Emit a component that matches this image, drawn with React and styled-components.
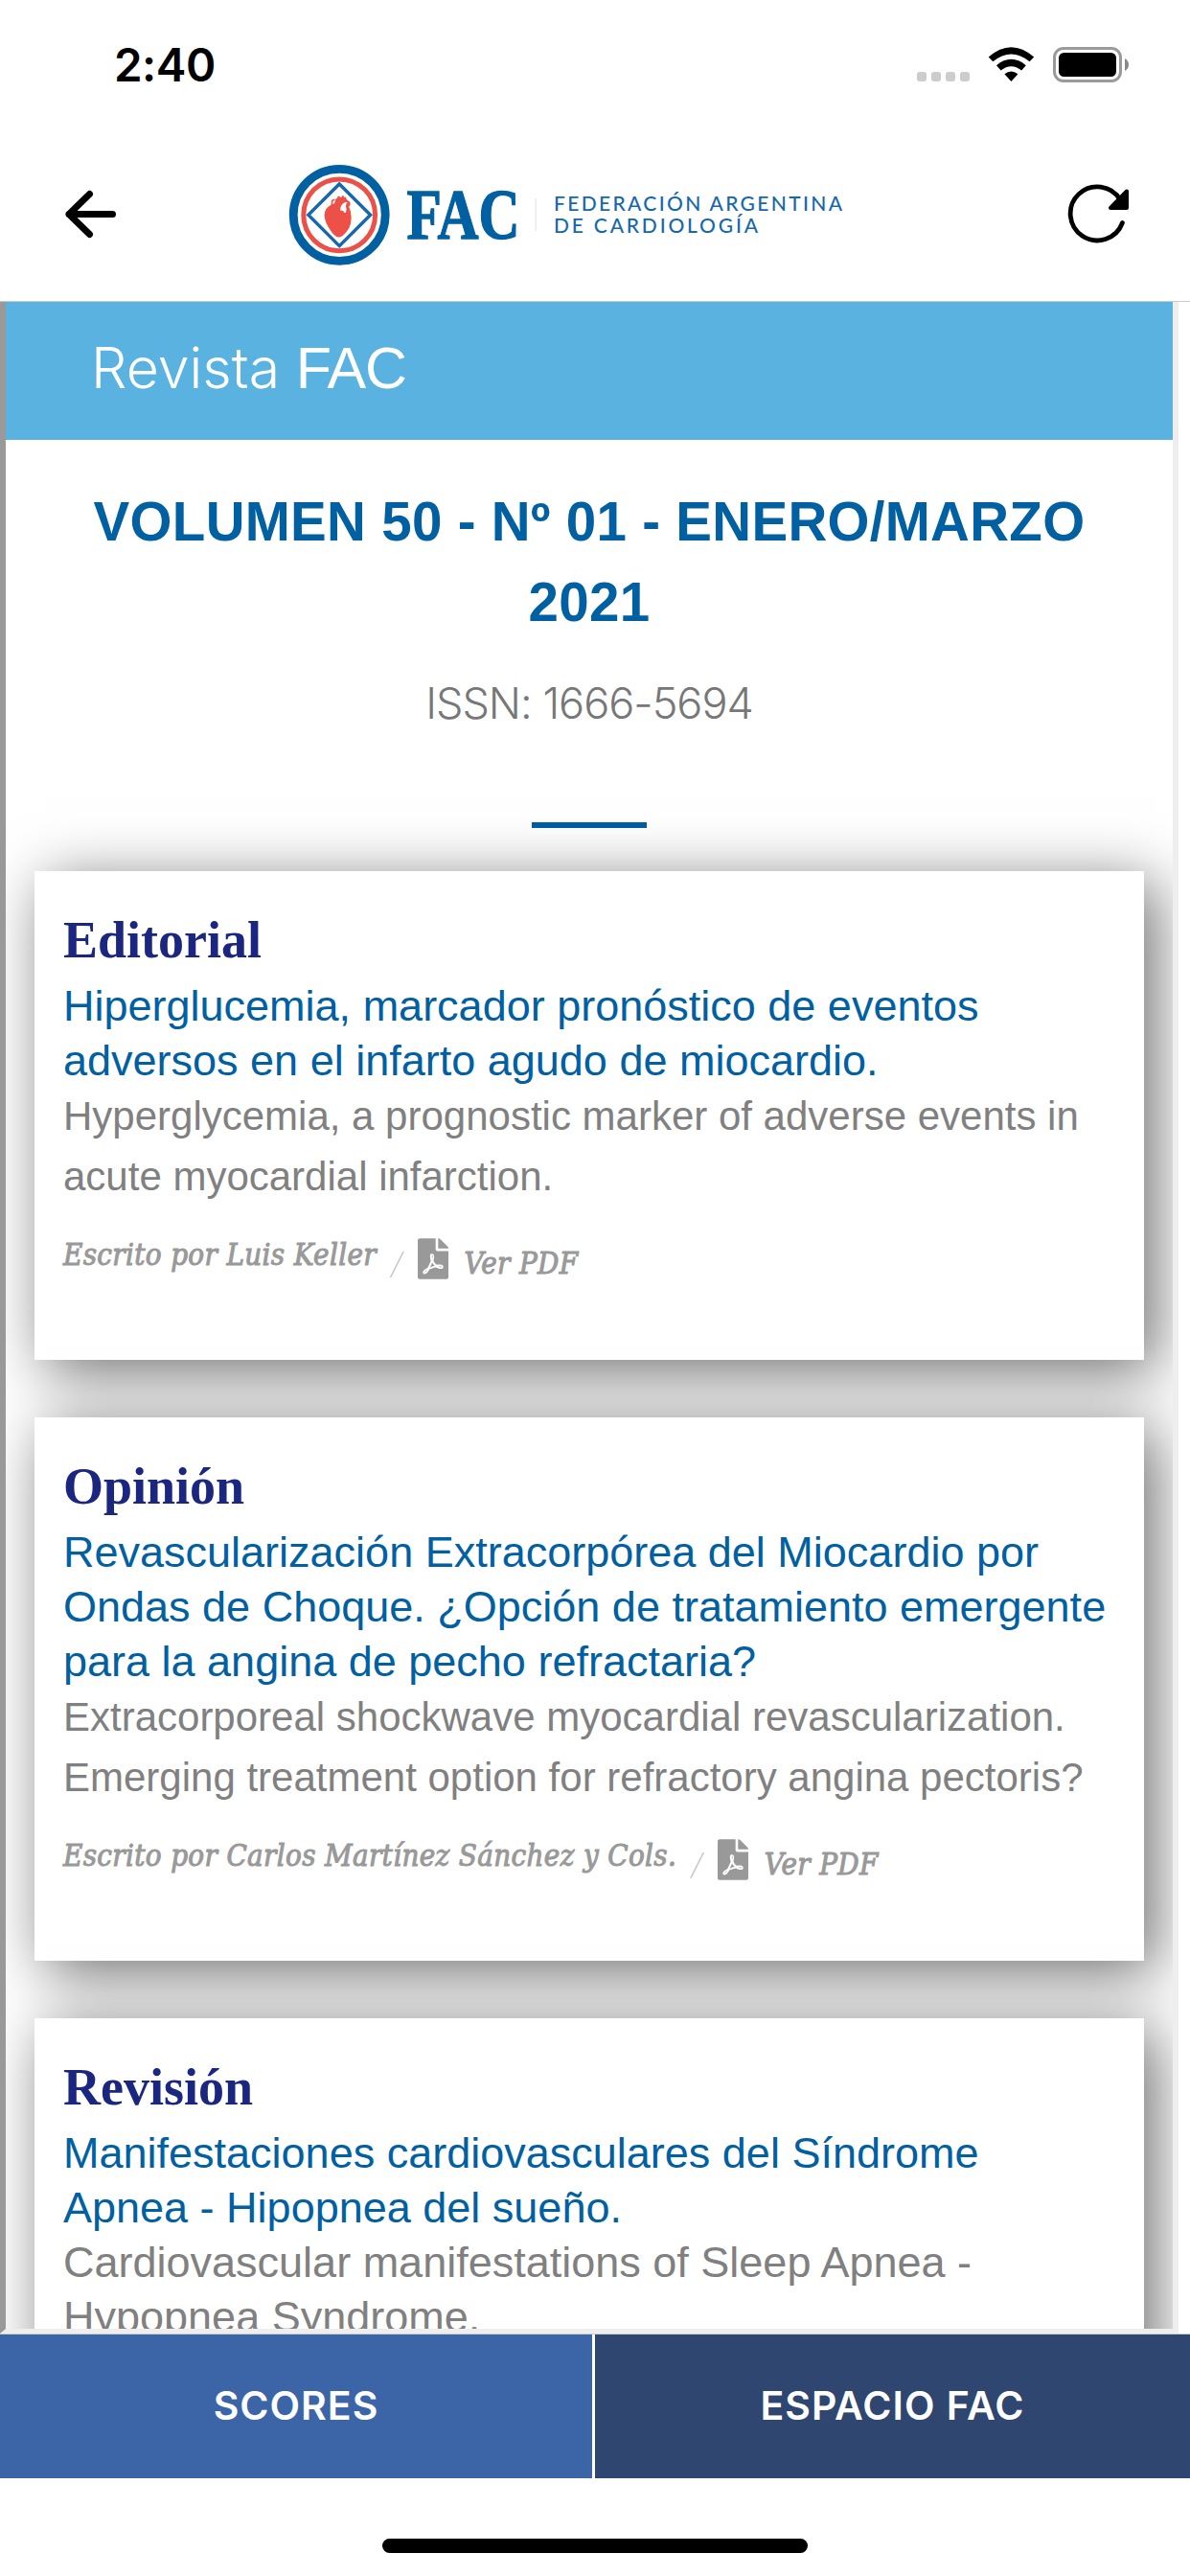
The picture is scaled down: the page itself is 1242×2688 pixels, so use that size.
import React, { Component } from 'react';
import styled, { createGlobalStyle } from 'styled-components';
import { FaFilePdf } from 'react-icons/fa';

const articles = [
  {
    section: 'Editorial',
    title: ['Hiperglucemia, marcador pronóstico de eventos', 'adversos en el infarto agudo de miocardio.'],
    subtitle: ['Hyperglycemia, a prognostic marker of adverse events in', 'acute myocardial infarction.'],
    author: 'Escrito por Luis Keller',
  },
  {
    section: 'Opinión',
    title: [
      'Revascularización Extracorpórea del Miocardio por',
      'Ondas de Choque. ¿Opción de tratamiento emergente',
      'para la angina de pecho refractaria?',
    ],
    subtitle: ['Extracorporeal shockwave myocardial revascularization.', 'Emerging treatment option for refractory angina pectoris?'],
    author: 'Escrito por Carlos Martínez Sánchez y Cols.',
  },
  {
    section: 'Revisión',
    title: ['Manifestaciones cardiovasculares del Síndrome', 'Apnea - Hipopnea del sueño.'],
    subtitle: ['Cardiovascular manifestations of Sleep Apnea -', 'Hypopnea Syndrome.'],
    compact: true,
  },
];

class StatusIcons extends Component {
  render() {
    return (
      <svg width="222" height="40" viewBox="957 47 222 40">
        {[957, 972, 987, 1002].map((x) => (
          <rect key={x} x={x} y="75" width="10" height="10" rx="3" fill="#ccc" />
        ))}
        <path d="M1031.7 59.5 Q1055.4 39 1079.2 59.5 L1074.6 64.3 Q1055.4 48.5 1036.3 64.3 Z" />
        <path d="M1040 68.2 Q1055.4 55.5 1070.8 68.2 L1066.2 73.6 Q1055.4 65 1044.6 73.6 Z" />
        <path d="M1048.4 77.3 Q1055.4 71.5 1062.4 77.3 L1055.4 85 Z" />
        <rect x="1100.5" y="50.5" width="69" height="34" rx="9.5" fill="none" stroke="#9a9a9a" strokeWidth="3" />
        <rect x="1105" y="55" width="60" height="25" rx="5.5" />
        <path d="M1174 61 Q1178 63.5 1178 67.5 Q1178 71.5 1174 74 Z" fill="#888" />
      </svg>
    );
  }
}

class Logo extends Component {
  render() {
    return (
      <LogoImage width="580" height="106" viewBox="301 171 580 106">
        <circle cx="354.2" cy="224.3" r="48" fill="none" stroke="#0060a2" strokeWidth="8.8" />
        <circle cx="354.2" cy="224.3" r="37.4" fill="none" stroke="#ec5047" strokeWidth="5" />
        <path d="M354.2 192 L386.6 224.3 L354.2 256.6 L321.8 224.3 Z" fill="#fff" stroke="#1668ac" strokeWidth="3.4" />
        <path
          d="M349 212.5 L350.5 207.5 L352.3 206.5 L352.3 205 L354.2 204.5 L355 206 L356.5 205.8 L357 204.2 L359 204.4 L359.2 206 L361 205.6 L361.6 207.8 Q365 210.5 363.8 214.5 L366 221 Q368.5 234 361.5 242 Q357 247.6 353.6 247.6 Q349 247.2 344 239 Q335.5 226 340.5 218 Q344 213.5 349 212.5 Z"
          fill="#ec5047"
        />
        <path d="M355 219.5 Q355.5 211 363 210.5 Q359.8 213.5 361.6 218 L361 222 Q358 222.5 358.5 220 Z" fill="#fff" />
        <path d="M346 217 L346.5 212 Q346 208 349.5 208.5" fill="none" stroke="#ec5047" strokeWidth="1.6" />
        <path d="M362 210 Q366.5 211 364 215" fill="none" stroke="#ec5047" strokeWidth="1.6" />
        <Wordmark x="424.5" y="248.8" textLength="118" lengthAdjust="spacingAndGlyphs">
          FAC
        </Wordmark>
        <rect x="558.5" y="207" width="1.5" height="34" fill="#ebebeb" />
        <Tagline x="578" y="220.3" textLength="301">
          FEDERACIÓN ARGENTINA
        </Tagline>
        <Tagline x="578" y="242.8" textLength="213">
          DE CARDIOLOGÍA
        </Tagline>
      </LogoImage>
    );
  }
}

class Article extends Component {
  renderLines(lines) {
    return lines.map((line) => <Line key={line}>{line}</Line>);
  }

  render() {
    const { section, title, subtitle, author, compact } = this.props.article;
    return (
      <Card>
        <Section>{section}</Section>
        <ArticleTitle>{this.renderLines(title)}</ArticleTitle>
        <Subtitle $compact={compact}>{this.renderLines(subtitle)}</Subtitle>
        {author && (
          <Meta>
            <span>{author}</span>
            <Slash>/</Slash>
            <PdfIcon />
            <PdfLink>Ver PDF</PdfLink>
          </Meta>
        )}
      </Card>
    );
  }
}

export default class App extends Component {
  render() {
    return (
      <Screen>
        <GlobalStyle />
        <StatusBar>
          <Time>2:40</Time>
          <StatusIcons />
        </StatusBar>
        <Header>
          <svg width="56" height="52" viewBox="67 198 56 52" fill="none" stroke="#000" strokeWidth="7" strokeLinecap="round" strokeLinejoin="round">
            <path d="M93.5 202.5 L72 223.5 L93.5 244.5 M72 223.5 H117.5" />
          </svg>
          <Logo />
          <svg width="66" height="64" viewBox="1114 192 66 64">
            <path d="M1169.2 208.5 A28 28 0 1 0 1171.4 232.6" fill="none" stroke="#000" strokeWidth="4.8" strokeLinecap="round" />
            <path d="M1176 199.5 L1176 217 L1159 217 Z" stroke="#000" strokeWidth="4" strokeLinejoin="round" />
          </svg>
        </Header>
        <Frame>
          <Banner>
            Revista <strong>FAC</strong>
          </Banner>
          <Volume>
            VOLUMEN 50 - Nº 01 - ENERO/MARZO
            <br />
            2021
          </Volume>
          <Issn>ISSN: 1666-5694</Issn>
          <Rule />
          <List>
            {articles.map((article) => (
              <Article key={article.section} article={article} />
            ))}
          </List>
        </Frame>
        <Tabs>
          <Tab $width="618px" $color="#3c65a8">
            SCORES
          </Tab>
          <Tab $width="621px" $color="#2e4670">
            ESPACIO FAC
          </Tab>
        </Tabs>
        <HomeIndicator />
      </Screen>
    );
  }
}

const GlobalStyle = createGlobalStyle`
  body {
    margin: 0;
    background: #fff;
  }
  * {
    box-sizing: border-box;
  }
`;

const Screen = styled.div`
  display: flex;
  flex-direction: column;
  width: 1242px;
  height: 2688px;
  overflow: hidden;
  background: #fff;
  font-family: 'Liberation Sans', Arial, sans-serif;
`;

const StatusBar = styled.div`
  display: flex;
  flex: none;
  align-items: center;
  justify-content: space-between;
  height: 132px;
  padding: 2px 63px 0 119px;
`;

const Time = styled.span`
  font-family: Inter, sans-serif;
  font-size: 47.5px;
  font-weight: 600;
  letter-spacing: -0.5px;
`;

const Header = styled.header`
  display: flex;
  flex: none;
  align-items: center;
  justify-content: space-between;
  height: 183px;
  padding: 1px 62px 0 67px;
  border-bottom: 1px solid #ccc;
`;

const LogoImage = styled.svg`
  margin-right: 55px;
`;

const Wordmark = styled.text`
  font-family: 'Liberation Serif', serif;
  font-size: 74.5px;
  font-weight: 700;
  fill: #0060a2;
  stroke: #0060a2;
  stroke-width: 1.4px;
`;

const Tagline = styled.text`
  font-family: Lato, sans-serif;
  font-size: 21px;
  font-weight: 500;
  fill: #1668ac;
`;

const Frame = styled.main`
  flex: none;
  width: 1230px;
  height: 2120px;
  overflow: hidden;
  border: solid #eee;
  border-width: 0 6px 5px;
  border-left-color: #999;
`;

const Banner = styled.h1`
  height: 144px;
  margin: 0;
  padding-left: 89px;
  background: #5ab2e1;
  color: #fff;
  font-family: Inter, sans-serif;
  font-size: 59px;
  font-weight: 300;
  line-height: 137px;

  strong {
    font-family: 'Liberation Sans', sans-serif;
    font-size: 61px;
    font-weight: 400;
    letter-spacing: -1.2px;
  }
`;

const Volume = styled.h2`
  margin: 44px 0 0;
  color: #0060a2;
  font-size: 56.5px;
  line-height: 84px;
  letter-spacing: 0.3px;
  text-align: center;
`;

const Issn = styled.p`
  margin: 29px 0 0;
  color: #777;
  font-family: Inter, sans-serif;
  font-size: 45px;
  font-weight: 300;
  line-height: 68px;
  letter-spacing: -1px;
  text-align: center;
`;

const Rule = styled.hr`
  width: 120px;
  height: 6px;
  margin: 90px auto 45px;
  border: 0;
  background: #0060a2;
`;

const List = styled.div`
  display: flex;
  flex-direction: column;
  gap: 60px;
  padding: 0 30px;
`;

const Card = styled.article`
  padding: 36px 30px 80px;
  background: #fff;
  box-shadow: 12px 12px 60px rgba(0, 0, 0, 0.57);
`;

const Section = styled.h3`
  margin: 0;
  color: #1a2680;
  font-family: 'Liberation Serif', 'Times New Roman', serif;
  font-size: 54px;
  line-height: 72px;
`;

const Line = styled.span`
  display: block;
  white-space: nowrap;
`;

const ArticleTitle = styled.p`
  margin: 4px 0 0;
  color: #0060a2;
  font-size: 45px;
  line-height: 57px;
`;

const Subtitle = styled.p`
  margin: ${(props) => (props.$compact ? '0' : '-2px')} 0 0;
  color: #808080;
  font-size: ${(props) => (props.$compact ? '45px' : '42px')};
  line-height: ${(props) => (props.$compact ? '57px' : '63px')};
`;

const Meta = styled.div`
  display: flex;
  align-items: flex-start;
  height: 50px;
  margin-top: 30px;
  color: #999;
  font-family: 'DejaVu Serif Condensed', 'DejaVu Serif', serif;
  font-size: 31px;
  font-style: italic;
  font-stretch: condensed;
  line-height: 40px;
  letter-spacing: 0.35px;
  white-space: nowrap;
  -webkit-text-stroke: 1px #999;
`;

const Slash = styled.span`
  margin: 13px 0 0 14px;
  color: #bbb;
  font-family: Lato, sans-serif;
  font-size: 35px;
  font-weight: 300;
  line-height: 32px;
  -webkit-text-stroke: 0;
`;

const PdfIcon = styled(FaFilePdf)`
  width: 32px;
  height: 43px;
  margin: 3px 0 0 14px;
`;

const PdfLink = styled.span`
  margin: 9px 0 0 17px;
`;

const Tabs = styled.nav`
  display: flex;
  flex: none;
  gap: 3px;
  height: 151px;
  border-top: 1px solid #ccc;
`;

const Tab = styled.div`
  display: flex;
  flex: 0 0 ${(props) => props.$width};
  align-items: center;
  justify-content: center;
  padding-bottom: 2px;
  background: ${(props) => props.$color};
  color: #fff;
  font-family: Inter, sans-serif;
  font-size: 41px;
  font-weight: 600;
  letter-spacing: 1px;
`;

const HomeIndicator = styled.div`
  flex: none;
  width: 444px;
  height: 15px;
  margin: 63px auto 0;
  border-radius: 8px;
  background: #000;
`;
